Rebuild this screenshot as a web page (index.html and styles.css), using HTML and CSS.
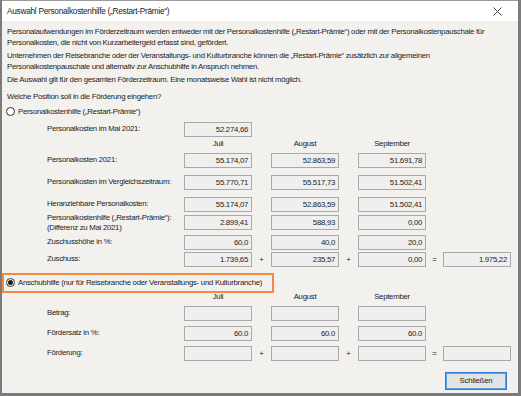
FILE: index.html
```html
<!DOCTYPE html>
<html lang="de">
<head>
<meta charset="utf-8">
<title>Auswahl Personalkostenhilfe</title>
<link rel="stylesheet" href="styles.css">
</head>
<body>
<div class="window">
  <div class="titlebar">
    <span class="title">Auswahl Personalkostenhilfe („Restart-Prämie“)</span>
    <svg class="close" width="9" height="9" viewBox="0 0 9 9"><path d="M0.5 0.5 L8.5 8.5 M8.5 0.5 L0.5 8.5" stroke="#444" stroke-width="1" fill="none"/></svg>
  </div>
  <div class="content">
    <p class="para">Personalaufwendungen im Förderzeitraum werden entweder mit der Personalkostenhilfe („Restart-Prämie“) oder mit der Personalkostenpauschale für<br>Personalkosten, die nicht von Kurzarbeitergeld erfasst sind, gefördert.</p>
    <p class="para">Unternehmen der Reisebranche oder der Veranstaltungs- und Kulturbranche können die „Restart-Prämie“ zusätzlich zur allgemeinen<br>Personalkostenpauschale und alternativ zur Anschubhilfe in Anspruch nehmen.</p>
    <p class="para">Die Auswahl gilt für den gesamten Förderzeitraum. Eine monatsweise Wahl ist nicht möglich.</p>
    <p class="question">Welche Position soll in die Förderung eingehen?</p>

    <div class="radio-row first">
      <span class="radio"></span>
      <span>Personalkostenhilfe („Restart-Prämie“)</span>
    </div>

    <div class="grid row-mai">
      <span class="label">Personalkosten im Mai 2021:</span>
      <span class="box">52.274,66</span>
    </div>
    <div class="grid row-head">
      <span></span>
      <span class="head">Juli</span><span></span>
      <span class="head">August</span><span></span>
      <span class="head">September</span>
    </div>
    <div class="grid row r1">
      <span class="label">Personalkosten 2021:</span>
      <span class="box">55.174,07</span><span></span>
      <span class="box">52.863,59</span><span></span>
      <span class="box">51.691,78</span>
    </div>
    <div class="grid row r2">
      <span class="label">Personalkosten im Vergleichszeitraum:</span>
      <span class="box">55.770,71</span><span></span>
      <span class="box">55.517,73</span><span></span>
      <span class="box">51.502,41</span>
    </div>
    <div class="grid row r2">
      <span class="label">Heranziehbare Personalkosten:</span>
      <span class="box">55.174,07</span><span></span>
      <span class="box">52.863,59</span><span></span>
      <span class="box">51.502,41</span>
    </div>
    <div class="grid row r3">
      <span class="label two">Personalkostenhilfe („Restart-Prämie“):<br>(Differenz zu Mai 2021)</span>
      <span class="box">2.899,41</span><span></span>
      <span class="box">588,93</span><span></span>
      <span class="box">0,00</span>
    </div>
    <div class="grid row r4">
      <span class="label">Zuschusshöhe in %:</span>
      <span class="box">60,0</span><span></span>
      <span class="box">40,0</span><span></span>
      <span class="box">20,0</span>
    </div>
    <div class="grid row r4">
      <span class="label">Zuschuss:</span>
      <span class="box">1.739,65</span><span class="sign">+</span>
      <span class="box">235,57</span><span class="sign">+</span>
      <span class="box">0,00</span><span class="sign">=</span>
      <span class="box">1.975,22</span>
    </div>

    <div class="radio-row highlight">
      <span class="radio checked"></span>
      <span>Anschubhilfe (nur für Reisebranche oder Veranstaltungs- und Kulturbranche)</span>
    </div>

    <div class="grid row-head2">
      <span></span>
      <span class="head">Juli</span><span></span>
      <span class="head">August</span><span></span>
      <span class="head">September</span>
    </div>
    <div class="grid row s1">
      <span class="label">Betrag:</span>
      <span class="box"></span><span></span>
      <span class="box"></span><span></span>
      <span class="box"></span>
    </div>
    <div class="grid row s2">
      <span class="label">Fördersatz in %:</span>
      <span class="box">60.0</span><span></span>
      <span class="box">60.0</span><span></span>
      <span class="box">60.0</span>
    </div>
    <div class="grid row s2">
      <span class="label">Förderung:</span>
      <span class="box"></span><span class="sign">+</span>
      <span class="box"></span><span class="sign">+</span>
      <span class="box"></span><span class="sign">=</span>
      <span class="box"></span>
    </div>

    <div class="footer">
      <button class="btn">Schließen</button>
    </div>
  </div>
</div>
</body>
</html>
```
FILE: styles.css
```css
* { box-sizing: border-box; }
html, body { margin: 0; padding: 0; }
body {
  width: 521px;
  height: 396px;
  overflow: hidden;
  background: #7b7b7b;
  font-family: "Liberation Sans", Arial, sans-serif;
  font-size: 7.8px;
  letter-spacing: -0.28px;
  color: #1c1c1c;
  white-space: nowrap;
}
.window {
  width: 516px;
  height: 393px;
  margin-left: 2px;
  background: #f2f1ee;
  display: flex;
  flex-direction: column;
  overflow: hidden;
}
.titlebar {
  height: 21px;
  flex: none;
  background: #ffffff;
  display: flex;
  align-items: center;
  justify-content: space-between;
  padding: 0 16px 0 5px;
  border-top: 1px solid #9a9a9a;
}
.title { font-size: 8.3px; color: #1a1a1a; }
.close { display: block; }
.content {
  flex: 1;
  padding: 6px 0 0 0;
  display: flex;
  flex-direction: column;
}
.para {
  margin: 0 0 3px 5px;
  line-height: 10.5px;
}
.question {
  margin: 3px 0 0 5px;
  line-height: 10px;
}
.radio-row {
  display: flex;
  align-items: center;
  gap: 3px;
  height: 20px;
  padding-left: 4px;
}
.radio-row.first { margin-top: 0; }
.radio {
  width: 9px;
  height: 9px;
  border: 1px solid #333;
  border-radius: 50%;
  background: #fff;
  display: inline-flex;
  align-items: center;
  justify-content: center;
}
.radio.checked::after {
  content: "";
  width: 5px;
  height: 5px;
  border-radius: 50%;
  background: #1a1a1a;
}
.highlight {
  width: 272px;
  border: 2px solid #f5893c;
  margin-top: 6px;
  padding-left: 2px;
}
.grid {
  display: grid;
  grid-template-columns: 137px 68px 19px 68px 19px 68px 17px 68px;
  padding-left: 45px;
  align-items: center;
}
.label { line-height: 10px; }
.box {
  height: 15px;
  background: #efefef;
  border: 1px solid #a9a9a9;
  text-align: right;
  padding: 0 3px 0 0;
  line-height: 13px;
}
.sign { text-align: center; }
.head { text-align: center; line-height: 10px; }
.row-mai { margin-top: 0px; }
.row-head { margin-top: 2px; height: 10px; }
.row.r1 { margin-top: 4px; }
.row.r2 { margin-top: 7px; }
.row.r3 { margin-top: 1px; }
.row.r4 { margin-top: 2px; }
.row-head2 { height: 10px; margin-top: -1px; }
.row.s1 { margin-top: 4px; }
.row.s2 { margin-top: 5px; }
.footer {
  display: flex;
  justify-content: flex-end;
  padding-right: 11px;
  margin-top: 11px;
}
.btn {
  width: 62px;
  height: 18px;
  font: inherit;
  letter-spacing: -0.2px;
  color: #1c1c1c;
  background: #e3e3e3;
  border: 1px solid #2a7ed6;
  box-shadow: inset 0 0 0 1px #59a4ef;
  padding: 0;
}
```
